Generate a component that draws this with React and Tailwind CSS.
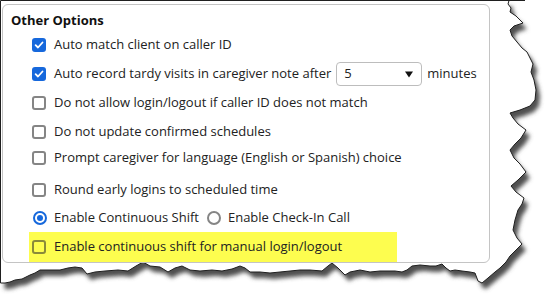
import React from "react";

const rightEdge = [
  [509, 0.5], [508, 4], [511, 8], [510, 12], [516, 16], [520, 20], [523, 23], [514, 26],
  [510, 30], [512, 36], [517, 42], [522, 48], [527, 52], [530, 58], [533, 64], [531, 72],
  [534, 80], [536, 90], [535, 100], [530, 106], [520, 110], [510, 113], [513, 118],
  [518, 124], [526, 130], [521, 138], [515, 144], [510, 150], [514, 158], [520, 164],
  [526, 172], [518, 180], [511, 186], [516, 192], [524, 198], [522, 204], [518, 210],
  [515, 220], [513, 230], [517, 238], [522, 244], [516, 250], [510, 256], [506, 262],
  [500, 268], [495, 272], [488, 278], [482, 283],
];

const bottomEdge = [
  [478, 281], [475, 273], [470, 272], [462, 271], [455, 270], [450, 271], [446, 268],
  [442, 264], [436, 266], [430, 266], [420, 265], [412, 266], [407, 270], [402, 272],
  [395, 271], [380, 271], [370, 272], [360, 270], [350, 272], [345, 275], [338, 268],
  [332, 263], [328, 266], [322, 271], [310, 270], [300, 270], [290, 271], [280, 272],
  [270, 273], [260, 272], [250, 272], [245, 268], [240, 266], [232, 269], [222, 271],
  [212, 270], [200, 271], [190, 270], [182, 266], [175, 268], [168, 272], [160, 267],
  [150, 266], [143, 262], [136, 266], [128, 271], [118, 270], [105, 271], [95, 272],
  [87, 274], [82, 268], [75, 267], [68, 268], [60, 270], [50, 270], [40, 270],
  [35, 273], [30, 275], [22, 279], [15, 280], [10, 282], [5, 283], [0.5, 283],
];

const paperPoints = [[0.5, 0.5], ...rightEdge, ...bottomEdge]
  .map(([x, y]) => `${x},${y}`)
  .join(" ");

const TornPaper = () => (
  <svg className="absolute inset-0" width="555" height="307">
    <defs>
      <filter id="tear-shadow" x="-10%" y="-10%" width="130%" height="130%">
        <feGaussianBlur stdDeviation="2" />
      </filter>
    </defs>
    <polygon
      points={paperPoints}
      fill="#4f4f4f"
      transform="translate(4,6)"
      filter="url(#tear-shadow)"
    />
    <polygon points={paperPoints} fill="#fff" stroke="#1f1f1f" strokeWidth="1" />
    <line x1="500" y1="0.5" x2="525" y2="0.5" stroke="#1f1f1f" strokeWidth="1" />
  </svg>
);

const Checkbox = ({ checked }) =>
  checked ? (
    <span className="w-[14px] h-[14px] rounded-[3px] bg-[#1668dc] flex items-center justify-center shrink-0">
      <svg width="10" height="10" viewBox="0 0 10 10">
        <path
          d="M1.6 5.2 L4 7.5 L8.5 2.5"
          fill="none"
          stroke="#fff"
          strokeWidth="1.8"
          strokeLinecap="round"
          strokeLinejoin="round"
        />
      </svg>
    </span>
  ) : (
    <span className="block w-[14px] h-[14px] rounded-[3px] border-2 border-[#858585] shrink-0" />
  );

const Radio = ({ checked, className = "" }) =>
  checked ? (
    <span className={`w-[14px] h-[14px] rounded-full border-2 border-[#1668dc] flex items-center justify-center shrink-0 ${className}`}>
      <span className="w-[6px] h-[6px] rounded-full bg-[#1668dc]" />
    </span>
  ) : (
    <span className={`block w-[14px] h-[14px] rounded-full border-2 border-[#858585] shrink-0 ${className}`} />
  );

const Option = ({ checked, label, className = "" }) => (
  <div className={`flex items-center h-[20px] ml-[29px] gap-[8px] ${className}`}>
    <Checkbox checked={checked} />
    <span>{label}</span>
  </div>
);

export default function App() {
  return (
    <div className="relative w-[555px] h-[307px] bg-white overflow-hidden font-['Open_Sans',sans-serif] text-[13px] text-[#222]">
      <TornPaper />
      <div className="relative pl-[2px] pt-[4px]">
        <div className="w-[488px] h-[259px] border border-[#c4c4c4] rounded-[6px] bg-white">
          <div className="mt-[5px] pl-[8px] h-[20px] leading-[20px] font-bold text-[13px] text-[#111]">
            Other Options
          </div>
          <Option checked label="Auto match client on caller ID" className="mt-[5px]" />
          <div className="flex items-center h-[20px] ml-[29px] mt-[9px]">
            <Checkbox checked />
            <span className="ml-[8px]">Auto record tardy visits in caregiver note after</span>
            <div className="ml-[5px] w-[86px] h-[24px] border border-[#bdbdbd] rounded-[4px] flex items-center justify-between pl-[7px] pr-[8px] shrink-0">
              <span>5</span>
              <svg width="8" height="7" viewBox="0 0 8 7">
                <polygon points="0,0.5 8,0.5 4,6.5" fill="#111" />
              </svg>
            </div>
            <span className="ml-[5px]">minutes</span>
          </div>
          <Option label="Do not allow login/logout if caller ID does not match" className="mt-[9px]" />
          <Option label="Do not update confirmed schedules" className="mt-[9px]" />
          <Option label="Prompt caregiver for language (English or Spanish) choice" className="mt-[6px]" />
          <Option label="Round early logins to scheduled time" className="mt-[12px]" />
          <div className="flex items-center h-[20px] ml-[30px] mt-[8px]">
            <Radio checked />
            <span className="ml-[7px]">Enable Continuous Shift</span>
            <Radio className="ml-[8px]" />
            <span className="ml-[7px]">Enable Check-In Call</span>
          </div>
          <div className="mt-[4px] ml-[26px] w-[368px] h-[30px] bg-[#fdfd4f] flex items-center pl-[3px] gap-[8px]">
            <span className="w-[14px] h-[14px] rounded-[3px] border-2 border-[#8a8a3a] shrink-0" />
            <span>Enable continuous shift for manual login/logout</span>
          </div>
        </div>
      </div>
    </div>
  );
}
